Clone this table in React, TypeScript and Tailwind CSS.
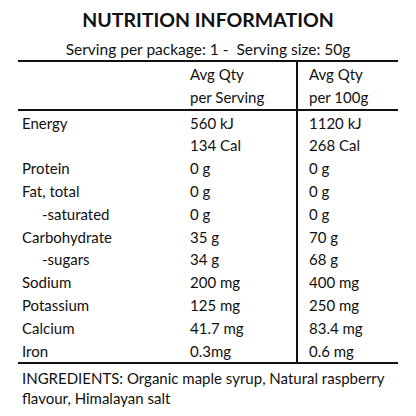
export default function App() {
  const rows: [string, string, string, boolean?][] = [
    ["Energy", "560 kJ", "1120 kJ"],
    ["", "134 Cal", "268 Cal"],
    ["Protein", "0 g", "0 g"],
    ["Fat, total", "0 g", "0 g"],
    ["-saturated", "0 g", "0 g", true],
    ["Carbohydrate", "35 g", "70 g"],
    ["-sugars", "34 g", "68 g", true],
    ["Sodium", "200 mg", "400 mg"],
    ["Potassium", "125 mg", "250 mg"],
    ["Calcium", "41.7 mg", "83.4 mg"],
    ["Iron", "0.3mg", "0.6 mg"],
  ];
  return (
    <div
      className="w-[416px] h-[416px] bg-white text-[#111] overflow-hidden"
      style={{ fontFamily: "Lato, 'Noto Sans', sans-serif" }}
    >
      <div className="pt-[6.5px] text-center text-[19.5px] font-bold leading-[26px]">
        NUTRITION INFORMATION
      </div>
      <div className="text-center text-[15.5px] leading-[22px] mt-[5px]">
        Serving per package: 1 -&nbsp; Serving size: 50g
      </div>
      <div className="mx-[18px] border-t-2 border-b-2 border-[#111] text-[15px] leading-[22.8px]">
        <div className="grid grid-cols-[168px_110px_1fr] pt-[1.5px]">
          <div />
          <div className="pl-[4px]">
            <div>Avg Qty</div>
            <div>per Serving</div>
          </div>
          <div className="border-l-2 border-[#111] pl-[11px] -mt-[1.5px] pt-[1.5px]">
            <div>Avg Qty</div>
            <div>per 100g</div>
          </div>
        </div>
        <div className="border-t-2 border-[#111] grid grid-cols-[168px_110px_1fr] pt-[1px]">
          <div className="pl-[4px]">
            {rows.map((r, i) => (
              <div key={i} className={r[3] ? "pl-[20px]" : ""}>
                {r[0] || "\u00a0"}
              </div>
            ))}
          </div>
          <div className="pl-[4px]">
            {rows.map((r, i) => (
              <div key={i}>{r[1]}</div>
            ))}
          </div>
          <div className="border-l-2 border-[#111] pl-[11px] -mt-[1px] pt-[1px]">
            {rows.map((r, i) => (
              <div key={i}>{r[2]}</div>
            ))}
          </div>
        </div>
      </div>
      <div className="px-[22px] pt-[4px] text-[15px] leading-[20px]">
        INGREDIENTS: Organic maple syrup, Natural raspberry flavour, Himalayan salt
      </div>
    </div>
  );
}
